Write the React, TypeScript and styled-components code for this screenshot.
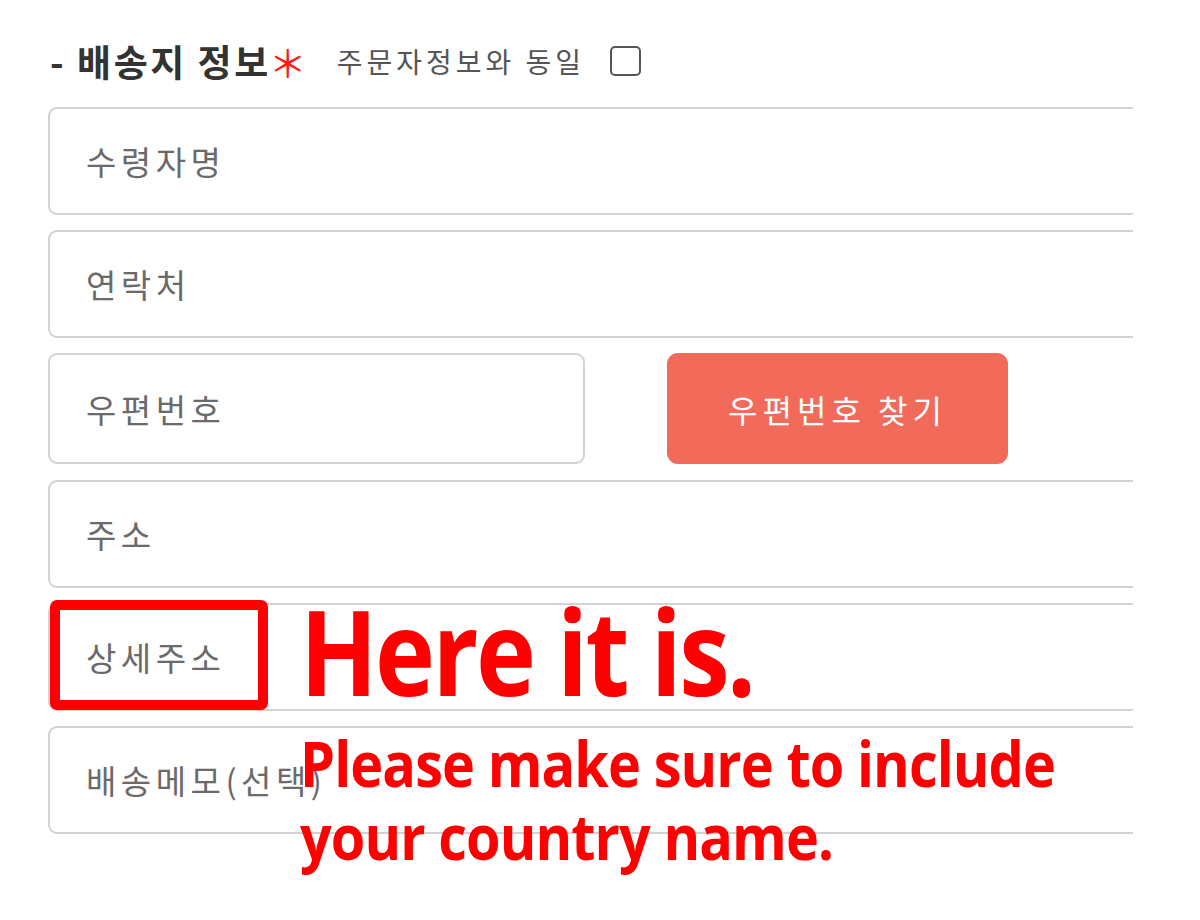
import styled, { createGlobalStyle } from 'styled-components'

const GlobalStyle = createGlobalStyle`
  html, body {
    margin: 0;
    padding: 0;
    background: #ffffff;
  }
  body {
    font-family: "Noto Sans CJK KR", "Noto Sans", sans-serif;
  }
`

const fields = ['수령자명', '연락처']
const lowerFields = ['주소']

const App = () => {
  return (
    <>
      <GlobalStyle />
      <Page>
        <Heading>
          <Title>- 배송지 정보</Title>
          <Required>＊</Required>
          <SameLabel>
            주문자정보와 동일
            <Check type="checkbox" />
          </SameLabel>
        </Heading>
        <Form>
          {fields.map((f) => (
            <Field key={f} placeholder={f} />
          ))}
          <ZipRow>
            <ZipField placeholder="우편번호" />
            <ZipButton type="button">우편번호 찾기</ZipButton>
          </ZipRow>
          {lowerFields.map((f) => (
            <Field key={f} placeholder={f} />
          ))}
          <Marked>
            <Field placeholder="상세주소" />
            <Highlight />
            <Callout>Here it is.</Callout>
          </Marked>
          <Marked>
            <Field placeholder="배송메모(선택)" />
            <Note>
              Please make sure to include
              <br />
              your country name.
            </Note>
          </Marked>
        </Form>
      </Page>
    </>
  )
}

export default App

const Page = styled.div`
  width: 1133px;
  height: 920px;
  overflow: hidden;
  padding: 37px 0 0 48px;
  box-sizing: border-box;
`

const Heading = styled.div`
  display: flex;
  align-items: center;
  height: 48px;
  padding-left: 2px;
`

const Title = styled.h2`
  margin: 0;
  font-size: 37px;
  font-weight: 700;
  color: #333;
  letter-spacing: 2.5px;
`

const Required = styled.span`
  color: #ff1a1a;
  font-size: 38px;
  font-weight: 400;
  margin-left: -2px;
`

const SameLabel = styled.label`
  display: flex;
  align-items: center;
  margin-left: 30px;
  font-size: 28px;
  color: #555;
  letter-spacing: 4px;
`

const Check = styled.input`
  appearance: none;
  width: 31px;
  height: 30px;
  margin: 0 0 0 25px;
  border: 2px solid #555;
  border-radius: 5px;
  background: #fff;
  box-sizing: border-box;
`

const Form = styled.div`
  display: flex;
  flex-direction: column;
  gap: 15px;
  margin-top: 22px;
`

const Field = styled.input`
  display: block;
  width: calc(100% + 40px);
  height: 108px;
  box-sizing: border-box;
  border: 2px solid #d2d2d2;
  border-radius: 9px;
  padding: 0 0 0 36px;
  font-family: "Noto Sans CJK KR", sans-serif;
  font-size: 33px;
  letter-spacing: 4.5px;
  color: #333;
  outline: none;
  background: #fff;

  &::placeholder {
    color: #6a6a6a;
  }
`

const ZipRow = styled.div`
  display: flex;
  align-items: stretch;
  gap: 82px;
  margin-bottom: 1px;
`

const ZipField = styled(Field)`
  width: 537px;
  height: 111px;
`

const ZipButton = styled.button`
  width: 341px;
  height: 111px;
  border: none;
  border-radius: 11px;
  background: #f16a5a;
  color: #fff;
  font-family: "Noto Sans CJK KR", sans-serif;
  font-size: 32px;
  letter-spacing: 5px;
  cursor: pointer;
`

const Marked = styled.div`
  position: relative;
`

const Highlight = styled.div`
  position: absolute;
  left: 2px;
  top: -3px;
  width: 218px;
  height: 110px;
  box-sizing: border-box;
  border: 10px solid #ff0000;
  border-radius: 7px;
  pointer-events: none;
`

const Callout = styled.div`
  position: absolute;
  left: 252px;
  top: -17px;
  font-family: "Open Sans", "Noto Sans", sans-serif;
  font-weight: 700;
  font-size: 118px;
  line-height: 1.1;
  color: #ff0000;
  letter-spacing: -3px;
  white-space: nowrap;
  transform: scaleX(0.86);
  transform-origin: left top;
`

const Note = styled.div`
  position: absolute;
  left: 252px;
  top: 1px;
  font-family: "Open Sans", "Noto Sans", sans-serif;
  font-weight: 700;
  font-size: 62px;
  line-height: 73px;
  color: #ff0000;
  letter-spacing: -1px;
  white-space: nowrap;
  transform: scaleX(0.9);
  transform-origin: left top;
`
